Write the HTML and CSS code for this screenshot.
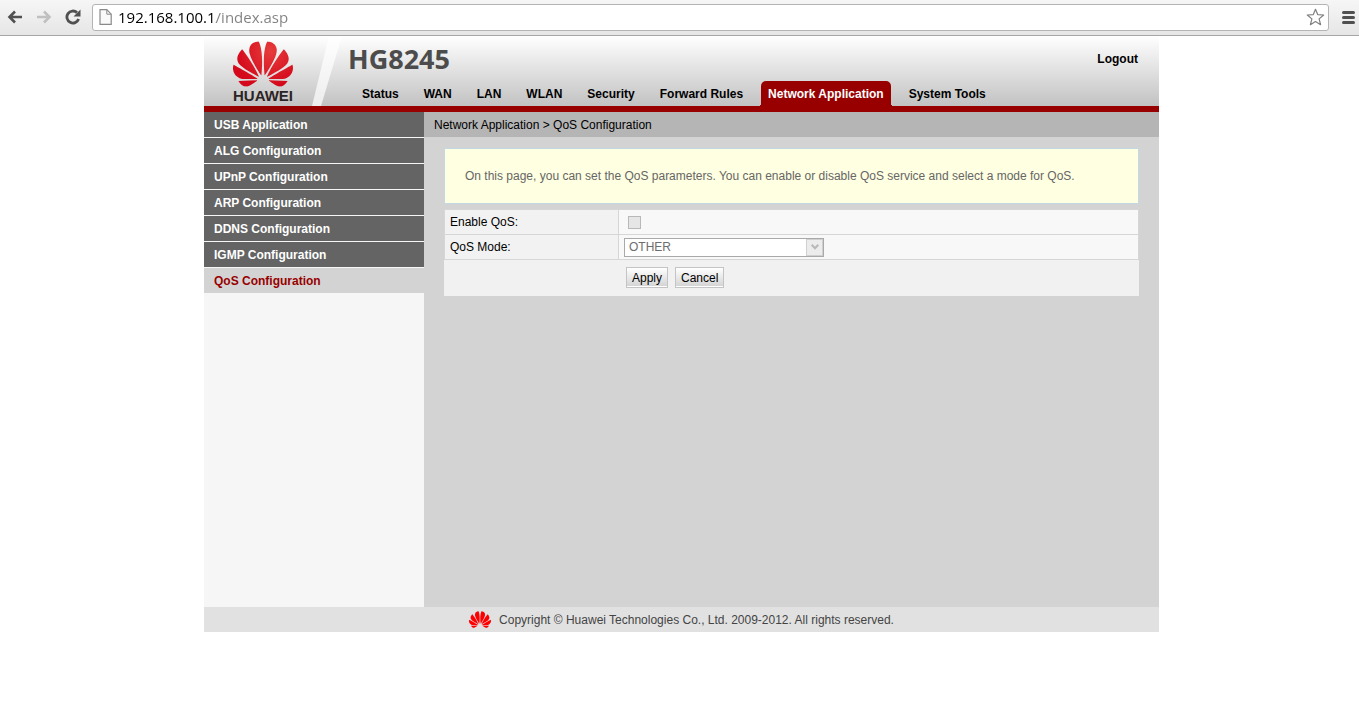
FILE: index.html
```html
<!DOCTYPE html>
<html lang="en">
<head>
    <meta charset="UTF-8">
    <meta name="viewport" content="width=device-width, initial-scale=1.0">
    <title>HG8245</title>
    <link rel="stylesheet" href="styles.css">
</head>
<body>
    <svg width="0" height="0" class="defs" aria-hidden="true">
        <symbol id="petals" viewBox="0 2.9 24 18.2">
            <path d="M3.67 6.14S1.82 7.91 1.72 9.78v.35c.08 1.51 1.22 2.4 1.22 2.4 1.83 1.79 6.26 4.04 7.3 4.55 0 0 .06.03.1-.01l.02-.04v-.04C7.52 10.8 3.67 6.14 3.67 6.14zM9.65 18.6c-.02-.08-.1-.08-.1-.08l-7.38.26c.8 1.43 2.15 2.53 3.56 2.2.96-.25 3.16-1.78 3.88-2.3.06-.05.04-.09.04-.09zm.08-.78C6.49 15.63.21 12.28.21 12.28c-.15.46-.2.9-.21 1.3v.07c0 1.07.4 1.82.4 1.82.8 1.69 2.34 2.2 2.34 2.2.7.3 1.4.31 1.4.31.12.02 4.4 0 5.54 0 .05 0 .08-.05.08-.05v-.06c0-.03-.03-.05-.03-.05zM9.06 3.19a3.42 3.42 0 00-2.57 3.15v.41c.03.6.16 1.05.16 1.05.66 2.9 3.86 7.65 4.55 8.65.05.05.1.03.1.03a.1.1 0 00.06-.1c1.06-10.6-1.11-13.42-1.11-13.42-.32.02-1.19.23-1.19.23zm8.299 2.27s-.49-1.8-2.44-2.28c0 0-.57-.14-1.17-.22 0 0-2.18 2.81-1.12 13.43.01.07.06.08.06.08.07.03.1-.03.1-.03.72-1.03 3.9-5.76 4.55-8.64 0 0 .36-1.4.02-2.34zm-2.92 13.07s-.07 0-.09.05c0 0-.01.07.03.1.7.51 2.85 2 3.88 2.3 0 0 .16.05.43.06h.14c.69-.02 1.9-.37 3-2.26l-7.4-.25zm7.83-8.41c.14-2.06-1.94-3.97-1.94-3.98 0 0-3.85 4.66-6.67 10.8 0 0-.03.08.02.13l.04.01h.06c1.06-.53 5.46-2.77 7.28-4.54 0 0 1.15-.93 1.21-2.42zm1.52 2.14s-6.28 3.37-9.52 5.55c0 0-.05.04-.03.11 0 0 .03.06.07.06 1.16 0 5.56 0 5.67-.02 0 0 .57-.02 1.27-.29 0 0 1.56-.5 2.37-2.27 0 0 .73-1.45.17-3.14z"/>
        </symbol>
        <radialGradient id="petal-shade" gradientUnits="userSpaceOnUse" cx="15" cy="7" r="14">
            <stop offset="0" stop-color="#e63c3c"/>
            <stop offset="1" stop-color="#d4081a"/>
        </radialGradient>
    </svg>

    <div class="toolbar">
        <button class="tool" type="button" aria-label="Back">
            <svg width="16" height="14" viewBox="0 0 16 14"><path d="M8 1.500L2.500 7L8 12.500M3 7H15" fill="none" stroke="#505050" stroke-width="2.600"/></svg>
        </button>
        <button class="tool" type="button" aria-label="Forward">
            <svg width="16" height="14" viewBox="0 0 16 14"><path d="M8 1.500L13.500 7L8 12.500M13 7H1" fill="none" stroke="#c0c0c0" stroke-width="2.600"/></svg>
        </button>
        <button class="tool" type="button" aria-label="Reload">
            <svg width="16" height="16" viewBox="0 0 16 16"><path d="M13.600 10A6 6 0 1 1 12 3.600" fill="none" stroke="#505050" stroke-width="2.800"/><path d="M15.500 0.500V7.500H8.500Z" fill="#505050"/></svg>
        </button>
        <div class="address">
            <svg width="13" height="16" viewBox="0 0 13 16"><path d="M1 .7H7.800L12.200 5.200V15.300H1Z" fill="#fafafa" stroke="#8a8a8a" stroke-width="1.200"/><path d="M7.800 .7V5.200H12.200" fill="none" stroke="#8a8a8a"/></svg>
            <input class="url" type="text" aria-label="Address" value="192.168.100.1/index.asp">
            <button class="star" type="button" aria-label="Bookmark">
                <svg width="19" height="18" viewBox="0 0 19 18"><path d="M9.500 1.300L11.700 6.600L17.700 7L13.100 10.900L14.600 16.700L9.500 13.600L4.400 16.700L5.900 10.900L1.300 7L7.300 6.600Z" fill="#fff" stroke="#808080" stroke-width="1.200" stroke-linejoin="round"/></svg>
            </button>
        </div>
        <button class="menu-button" type="button" aria-label="Menu">
            <svg width="13" height="13" viewBox="0 0 13 13"><path d="M1.500 1.500H11.500M1.500 6.500H11.500M1.500 11.500H11.500" stroke="#505050" stroke-width="3" stroke-linecap="round"/></svg>
        </button>
    </div>

    <div class="page">
        <header class="header">
            <div class="logo">
                <svg width="60" height="46" viewBox="0 2.900 24 18.200" fill="url(#petal-shade)"><use href="#petals" x="0" y="2.900" width="24" height="18.200"/></svg>
                <span>HUAWEI</span>
            </div>
            <svg class="shine" width="30" height="70" viewBox="0 0 30 70"><path d="M17 0H30L9 70H0Z" fill="#fff" fill-opacity=".7"/></svg>
            <div class="header-main">
                <div class="title-row">
                    <h1>HG8245</h1>
                    <a class="logout" href="#">Logout</a>
                </div>
                <nav class="tabs">
                    <a href="#">Status</a>
                    <a href="#">WAN</a>
                    <a href="#">LAN</a>
                    <a href="#">WLAN</a>
                    <a href="#">Security</a>
                    <a href="#">Forward Rules</a>
                    <a href="#" class="active">Network Application</a>
                    <a href="#">System Tools</a>
                </nav>
            </div>
        </header>

        <div class="content">
            <nav class="side">
                <a href="#">USB Application</a>
                <a href="#">ALG Configuration</a>
                <a href="#">UPnP Configuration</a>
                <a href="#">ARP Configuration</a>
                <a href="#">DDNS Configuration</a>
                <a href="#">IGMP Configuration</a>
                <a href="#" class="active">QoS Configuration</a>
            </nav>
            <main class="main">
                <div class="crumbs">Network Application &gt; QoS Configuration</div>
                <form class="panel">
                    <p class="info">On this page, you can set the QoS parameters. You can enable or disable QoS service and select a mode for QoS.</p>
                    <table class="settings">
                        <tr>
                            <th scope="row"><label for="enable-qos">Enable QoS:</label></th>
                            <td><input type="checkbox" id="enable-qos" disabled></td>
                        </tr>
                        <tr>
                            <th scope="row"><label for="qos-mode">QoS Mode:</label></th>
                            <td>
                                <div class="select">
                                    <select id="qos-mode" disabled>
                                        <option>OTHER</option>
                                    </select>
                                    <span class="arrow"><svg width="8" height="6" viewBox="0 0 8 6"><path d="M.7 .8L4 4.200L7.300 .8" fill="none" stroke="#b8b8b8" stroke-width="2"/></svg></span>
                                </div>
                            </td>
                        </tr>
                    </table>
                    <div class="actions">
                        <button type="button">Apply</button>
                        <button type="button">Cancel</button>
                    </div>
                </form>
            </main>
        </div>

        <footer class="footer">
            <svg width="22" height="17" fill="#f00"><use href="#petals" width="22" height="17"/></svg>
            <span>Copyright © Huawei Technologies Co., Ltd. 2009-2012. All rights reserved.</span>
        </footer>
    </div>
</body>
</html>
```
FILE: styles.css
```css
* {
    margin: 0;
    padding: 0;
    box-sizing: border-box;
}

body {
    font-family: "Liberation Sans", Arial, sans-serif;
    font-size: 12px;
    line-height: 14px;
    color: #000;
    background: #fff;
}

a {
    color: inherit;
    text-decoration: none;
}

svg {
    display: block;
    flex: none;
}

.defs {
    position: absolute;
}

/* browser bar */
.toolbar {
    display: flex;
    align-items: center;
    height: 36px;
    padding: 0 4px 1px 7px;
    background: linear-gradient(#f6f6f6, #e6e6e6);
    border-bottom: 1px solid #a6a6a6;
}

.tool,
.star,
.menu-button {
    border: none;
    background: none;
}

.tool {
    margin-right: 13px;
}

.address {
    flex: 1;
    display: flex;
    align-items: center;
    height: 27px;
    margin-left: -2px;
    padding: 0 3px 0 6px;
    background: #fff;
    border: 1px solid #b4b4b4;
    border-radius: 3px;
}

.url {
    flex: 1;
    min-width: 0;
    height: 24px;
    margin-left: 6px;
    border: none;
    outline: none;
    font: 15px "Open Sans", "Segoe UI", sans-serif;
    color: transparent;
    background: linear-gradient(90deg, #000 98px, #808080 98px);
    -webkit-background-clip: text;
    background-clip: text;
}

.menu-button {
    margin-left: 13px;
}

/* router page */
.page {
    width: 959px;
    max-width: 100%;
    margin: 0 auto;
    padding-left: 4px;
}

.header {
    display: flex;
    height: 76px;
    background: linear-gradient(#fff, #c2c2c2);
    border-bottom: 6px solid #980000;
}

.logo {
    width: 108px;
    padding: 5px 0 0 29px;
}

.logo span {
    display: block;
    font-size: 15px;
    line-height: 18px;
    font-weight: bold;
    color: #2c2424;
}

.header-main {
    flex: 1;
    display: flex;
    flex-direction: column;
    justify-content: space-between;
    padding-left: 6px;
}

.title-row {
    display: flex;
    justify-content: space-between;
    align-items: center;
    height: 45px;
    padding-right: 21px;
}

h1 {
    font: bold 27px "Open Sans", Tahoma, sans-serif;
    color: #4c4c4c;
}

.logout {
    font-weight: bold;
}

.tabs {
    display: flex;
    gap: 11px;
    margin-left: 7px;
    font-weight: bold;
    line-height: 24px;
}

.tabs a {
    position: relative;
    padding: 1px 7px 0;
    white-space: nowrap;
}

.tabs .active {
    color: #fff;
    background: #980000;
    border-radius: 5px 5px 0 0;
}

/* small curves where the tab meets the bar */
.tabs .active::before,
.tabs .active::after {
    content: "";
    position: absolute;
    bottom: 0;
    width: 2px;
    height: 2px;
}

.tabs .active::before {
    right: 100%;
    background: radial-gradient(circle at 0 0, transparent 2px, #980000 2px);
}

.tabs .active::after {
    left: 100%;
    background: radial-gradient(circle at 100% 0, transparent 2px, #980000 2px);
}

.content {
    display: flex;
    min-height: 495px;
}

.side {
    width: 220px;
    background: #f6f6f6;
    font-weight: bold;
    line-height: 24px;
}

.side a {
    display: block;
    padding: 1px 0 0 10px;
    color: #fff;
    background: #646464;
    border-bottom: 1px solid #f6f6f6;
}

.side .active {
    color: #980000;
    background: #d3d3d3;
}

.main {
    flex: 1;
    background: #d3d3d3;
}

.crumbs {
    padding: 1px 0 0 10px;
    line-height: 24px;
    background: #b5b5b5;
}

.panel {
    padding: 11px 20px;
}

.info {
    padding: 20px;
    margin-bottom: 5px;
    color: #666;
    background: #ffffe1;
    border: 1px solid #c2d8e2;
}

.settings {
    width: 100%;
    border-collapse: collapse;
    background: #f8f8f8;
}

.settings th,
.settings td {
    height: 25px;
    padding: 0 5px;
    border: 1px solid #d6d6d6;
}

.settings th {
    width: 174px;
    text-align: left;
    font-weight: normal;
    background: #f2f2f2;
}

input[type="checkbox"] {
    display: block;
    appearance: none;
    width: 13px;
    height: 13px;
    margin-left: 4px;
    background: #e6e6e6;
    border: 1px solid #b8b8b8;
}

.select {
    position: relative;
    width: 200px;
}

.select select {
    display: block;
    appearance: none;
    width: 100%;
    height: 19px;
    padding-left: 4px;
    border: 1px solid #a9a9a9;
    border-radius: 0;
    background: #fff;
    font: 12px "Liberation Sans", Arial, sans-serif;
    color: #6d6d6d;
    opacity: 1;
}

.arrow {
    position: absolute;
    top: 1px;
    right: 1px;
    display: flex;
    align-items: center;
    justify-content: center;
    width: 17px;
    height: 17px;
    background: #ececec;
    border: 1px solid #d0d0d0;
}

.actions {
    display: flex;
    gap: 7px;
    padding: 7px 0 8px 182px;
    background: #f1f1f1;
}

.actions button {
    height: 21px;
    padding: 0 5px;
    font: 12px "Liberation Sans", Arial, sans-serif;
    color: #000;
    background: linear-gradient(#fff, #d2d2d2);
    border: 1px solid #c4c4c4;
    box-shadow: inset 0 -1px #fff;
}

.footer {
    display: flex;
    align-items: center;
    justify-content: center;
    gap: 8px;
    height: 25px;
    color: #444;
    background: #e1e1e1;
}
```
